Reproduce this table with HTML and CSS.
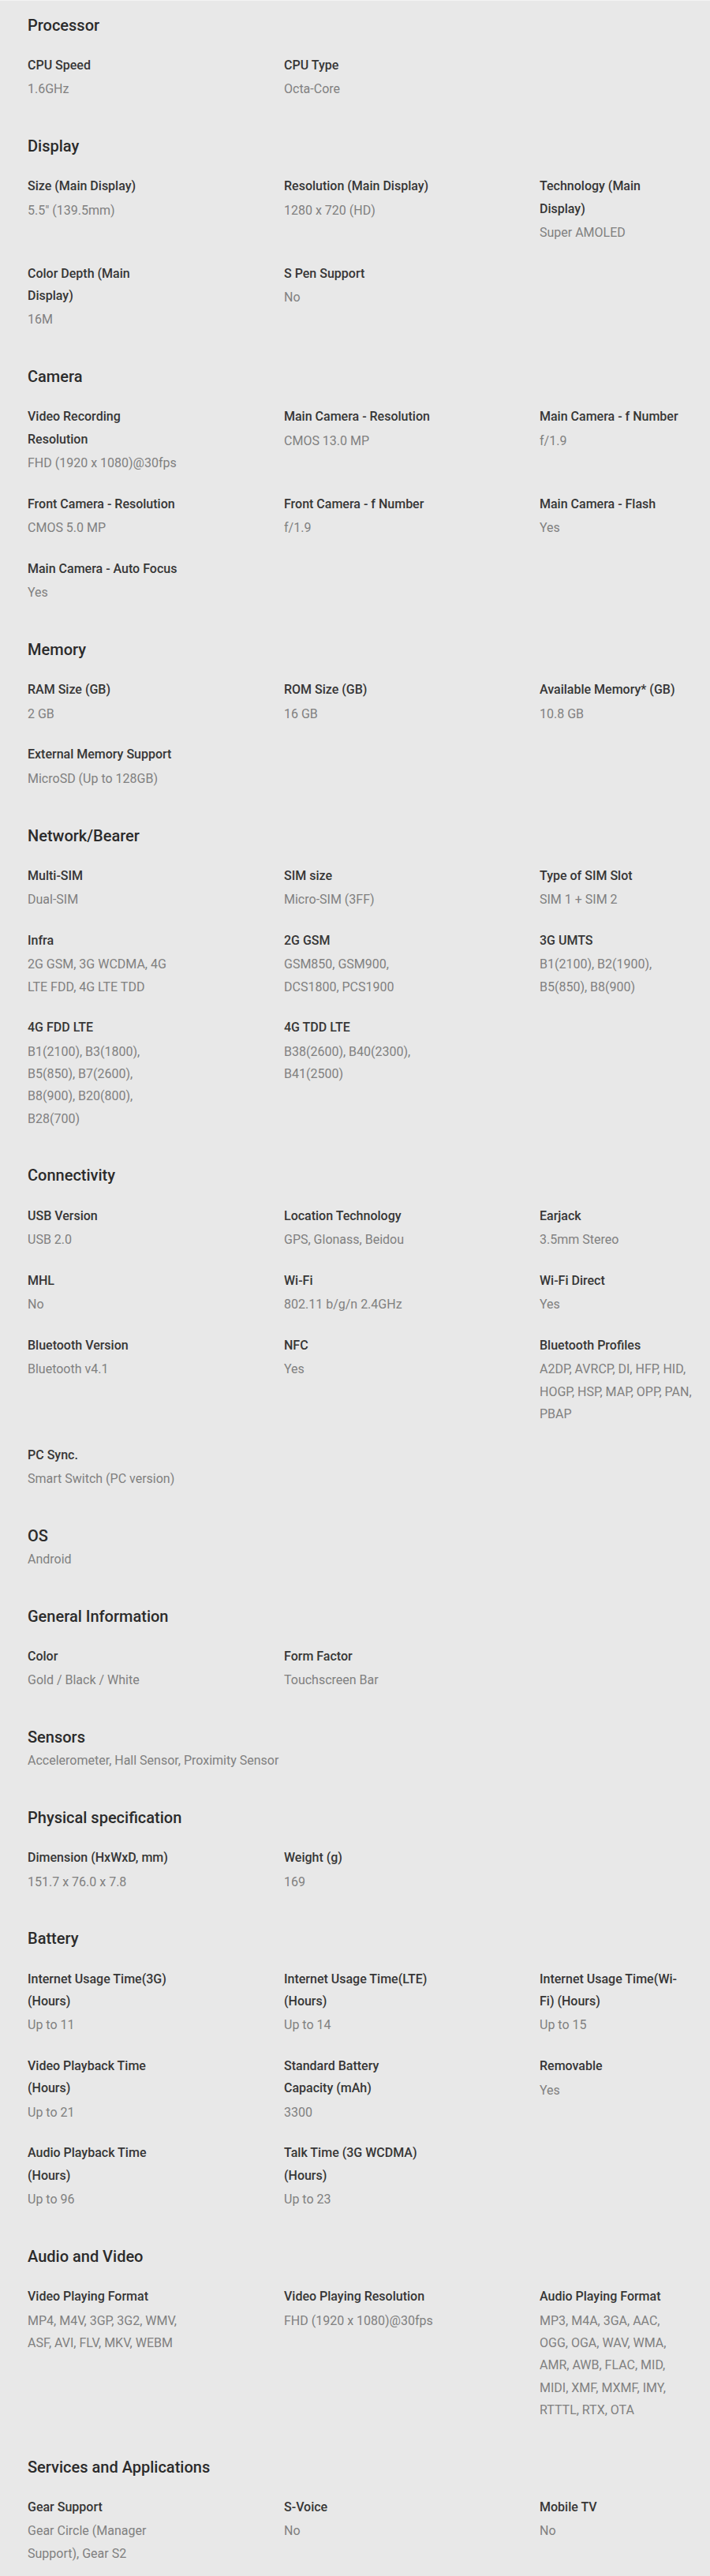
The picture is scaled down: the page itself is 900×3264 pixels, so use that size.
FILE: index.html
```html
<!DOCTYPE html>
<html lang="en">
<head>
    <meta charset="UTF-8">
    <meta name="viewport" content="width=device-width, initial-scale=1.0">
    <title>Specifications</title>
    <link rel="stylesheet" href="styles.css">
</head>
<body>

<div class="specs">

    <section class="spec-section">
        <h2 class="spec-title">Processor</h2>
        <div class="spec-grid">
            <div class="spec-item"><p class="spec-label">CPU Speed</p><p class="spec-value">1.6GHz</p></div>
            <div class="spec-item"><p class="spec-label">CPU Type</p><p class="spec-value">Octa-Core</p></div>
        </div>
    </section>

    <section class="spec-section">
        <h2 class="spec-title">Display</h2>
        <div class="spec-grid">
            <div class="spec-item"><p class="spec-label">Size (Main Display)</p><p class="spec-value">5.5" (139.5mm)</p></div>
            <div class="spec-item"><p class="spec-label">Resolution (Main Display)</p><p class="spec-value">1280 x 720 (HD)</p></div>
            <div class="spec-item"><p class="spec-label">Technology (Main<br>Display)</p><p class="spec-value">Super AMOLED</p></div>
            <div class="spec-item"><p class="spec-label">Color Depth (Main<br>Display)</p><p class="spec-value">16M</p></div>
            <div class="spec-item"><p class="spec-label">S Pen Support</p><p class="spec-value">No</p></div>
        </div>
    </section>

    <section class="spec-section">
        <h2 class="spec-title">Camera</h2>
        <div class="spec-grid">
            <div class="spec-item"><p class="spec-label">Video Recording<br>Resolution</p><p class="spec-value">FHD (1920 x 1080)@30fps</p></div>
            <div class="spec-item"><p class="spec-label">Main Camera - Resolution</p><p class="spec-value">CMOS 13.0 MP</p></div>
            <div class="spec-item"><p class="spec-label">Main Camera - f Number</p><p class="spec-value">f/1.9</p></div>
            <div class="spec-item"><p class="spec-label">Front Camera - Resolution</p><p class="spec-value">CMOS 5.0 MP</p></div>
            <div class="spec-item"><p class="spec-label">Front Camera - f Number</p><p class="spec-value">f/1.9</p></div>
            <div class="spec-item"><p class="spec-label">Main Camera - Flash</p><p class="spec-value">Yes</p></div>
            <div class="spec-item"><p class="spec-label">Main Camera - Auto Focus</p><p class="spec-value">Yes</p></div>
        </div>
    </section>

    <section class="spec-section">
        <h2 class="spec-title">Memory</h2>
        <div class="spec-grid">
            <div class="spec-item"><p class="spec-label">RAM Size (GB)</p><p class="spec-value">2 GB</p></div>
            <div class="spec-item"><p class="spec-label">ROM Size (GB)</p><p class="spec-value">16 GB</p></div>
            <div class="spec-item"><p class="spec-label">Available Memory* (GB)</p><p class="spec-value">10.8 GB</p></div>
            <div class="spec-item"><p class="spec-label">External Memory Support</p><p class="spec-value">MicroSD (Up to 128GB)</p></div>
        </div>
    </section>

    <section class="spec-section">
        <h2 class="spec-title">Network/Bearer</h2>
        <div class="spec-grid">
            <div class="spec-item"><p class="spec-label">Multi-SIM</p><p class="spec-value">Dual-SIM</p></div>
            <div class="spec-item"><p class="spec-label">SIM size</p><p class="spec-value">Micro-SIM (3FF)</p></div>
            <div class="spec-item"><p class="spec-label">Type of SIM Slot</p><p class="spec-value">SIM 1 + SIM 2</p></div>
            <div class="spec-item"><p class="spec-label">Infra</p><p class="spec-value">2G GSM, 3G WCDMA, 4G<br>LTE FDD, 4G LTE TDD</p></div>
            <div class="spec-item"><p class="spec-label">2G GSM</p><p class="spec-value">GSM850, GSM900,<br>DCS1800, PCS1900</p></div>
            <div class="spec-item"><p class="spec-label">3G UMTS</p><p class="spec-value">B1(2100), B2(1900),<br>B5(850), B8(900)</p></div>
            <div class="spec-item"><p class="spec-label">4G FDD LTE</p><p class="spec-value">B1(2100), B3(1800),<br>B5(850), B7(2600),<br>B8(900), B20(800),<br>B28(700)</p></div>
            <div class="spec-item"><p class="spec-label">4G TDD LTE</p><p class="spec-value">B38(2600), B40(2300),<br>B41(2500)</p></div>
        </div>
    </section>

    <section class="spec-section">
        <h2 class="spec-title">Connectivity</h2>
        <div class="spec-grid">
            <div class="spec-item"><p class="spec-label">USB Version</p><p class="spec-value">USB 2.0</p></div>
            <div class="spec-item"><p class="spec-label">Location Technology</p><p class="spec-value">GPS, Glonass, Beidou</p></div>
            <div class="spec-item"><p class="spec-label">Earjack</p><p class="spec-value">3.5mm Stereo</p></div>
            <div class="spec-item"><p class="spec-label">MHL</p><p class="spec-value">No</p></div>
            <div class="spec-item"><p class="spec-label">Wi-Fi</p><p class="spec-value">802.11 b/g/n 2.4GHz</p></div>
            <div class="spec-item"><p class="spec-label">Wi-Fi Direct</p><p class="spec-value">Yes</p></div>
            <div class="spec-item"><p class="spec-label">Bluetooth Version</p><p class="spec-value">Bluetooth v4.1</p></div>
            <div class="spec-item"><p class="spec-label">NFC</p><p class="spec-value">Yes</p></div>
            <div class="spec-item"><p class="spec-label">Bluetooth Profiles</p><p class="spec-value">A2DP, AVRCP, DI, HFP, HID,<br>HOGP, HSP, MAP, OPP, PAN,<br>PBAP</p></div>
            <div class="spec-item"><p class="spec-label">PC Sync.</p><p class="spec-value">Smart Switch (PC version)</p></div>
        </div>
    </section>

    <section class="spec-section spec-section--plain">
        <h2 class="spec-title">OS</h2>
        <p class="spec-value">Android</p>
    </section>

    <section class="spec-section">
        <h2 class="spec-title">General Information</h2>
        <div class="spec-grid">
            <div class="spec-item"><p class="spec-label">Color</p><p class="spec-value">Gold / Black / White</p></div>
            <div class="spec-item"><p class="spec-label">Form Factor</p><p class="spec-value">Touchscreen Bar</p></div>
        </div>
    </section>

    <section class="spec-section spec-section--plain">
        <h2 class="spec-title">Sensors</h2>
        <p class="spec-value">Accelerometer, Hall Sensor, Proximity Sensor</p>
    </section>

    <section class="spec-section">
        <h2 class="spec-title">Physical specification</h2>
        <div class="spec-grid">
            <div class="spec-item"><p class="spec-label">Dimension (HxWxD, mm)</p><p class="spec-value">151.7 x 76.0 x 7.8</p></div>
            <div class="spec-item"><p class="spec-label">Weight (g)</p><p class="spec-value">169</p></div>
        </div>
    </section>

    <section class="spec-section">
        <h2 class="spec-title">Battery</h2>
        <div class="spec-grid">
            <div class="spec-item"><p class="spec-label">Internet Usage Time(3G)<br>(Hours)</p><p class="spec-value">Up to 11</p></div>
            <div class="spec-item"><p class="spec-label">Internet Usage Time(LTE)<br>(Hours)</p><p class="spec-value">Up to 14</p></div>
            <div class="spec-item"><p class="spec-label">Internet Usage Time(Wi-<br>Fi) (Hours)</p><p class="spec-value">Up to 15</p></div>
            <div class="spec-item"><p class="spec-label">Video Playback Time<br>(Hours)</p><p class="spec-value">Up to 21</p></div>
            <div class="spec-item"><p class="spec-label">Standard Battery<br>Capacity (mAh)</p><p class="spec-value">3300</p></div>
            <div class="spec-item"><p class="spec-label">Removable</p><p class="spec-value">Yes</p></div>
            <div class="spec-item"><p class="spec-label">Audio Playback Time<br>(Hours)</p><p class="spec-value">Up to 96</p></div>
            <div class="spec-item"><p class="spec-label">Talk Time (3G WCDMA)<br>(Hours)</p><p class="spec-value">Up to 23</p></div>
        </div>
    </section>

    <section class="spec-section">
        <h2 class="spec-title">Audio and Video</h2>
        <div class="spec-grid">
            <div class="spec-item"><p class="spec-label">Video Playing Format</p><p class="spec-value">MP4, M4V, 3GP, 3G2, WMV,<br>ASF, AVI, FLV, MKV, WEBM</p></div>
            <div class="spec-item"><p class="spec-label">Video Playing Resolution</p><p class="spec-value">FHD (1920 x 1080)@30fps</p></div>
            <div class="spec-item"><p class="spec-label">Audio Playing Format</p><p class="spec-value">MP3, M4A, 3GA, AAC,<br>OGG, OGA, WAV, WMA,<br>AMR, AWB, FLAC, MID,<br>MIDI, XMF, MXMF, IMY,<br>RTTTL, RTX, OTA</p></div>
        </div>
    </section>

    <section class="spec-section">
        <h2 class="spec-title">Services and Applications</h2>
        <div class="spec-grid">
            <div class="spec-item"><p class="spec-label">Gear Support</p><p class="spec-value">Gear Circle (Manager<br>Support), Gear S2</p></div>
            <div class="spec-item"><p class="spec-label">S-Voice</p><p class="spec-value">No</p></div>
            <div class="spec-item"><p class="spec-label">Mobile TV</p><p class="spec-value">No</p></div>
        </div>
    </section>

</div>

</body>
</html>
```

FILE: styles.css
```css
body {
    margin: 0;
    background-color: #e8e8e8;
    font-family: Roboto, "Liberation Sans", Arial, sans-serif;
}
.specs {
    border-top: 1px solid #f3f3f3;
    padding: 16.5px 0 14px 35px;
}
.spec-section + .spec-section {
    margin-top: 43.4px;
}
.spec-title {
    margin: 0 0 23.3px;
    font-size: 20px;
    line-height: 28px;
    font-weight: 500;
    color: #2b2b2b;
}
.spec-grid {
    display: grid;
    grid-template-columns: 325px 324px 1fr;
    row-gap: 23.3px;
}
.spec-label {
    margin: 0;
    font-size: 16px;
    line-height: 28.3px;
    font-weight: 500;
    color: #363636;
}
.spec-value {
    margin: 2.2px 0 0;
    font-size: 16px;
    line-height: 28.3px;
    color: #808080;
}
.spec-section--plain .spec-title {
    margin-bottom: 0;
}
```
